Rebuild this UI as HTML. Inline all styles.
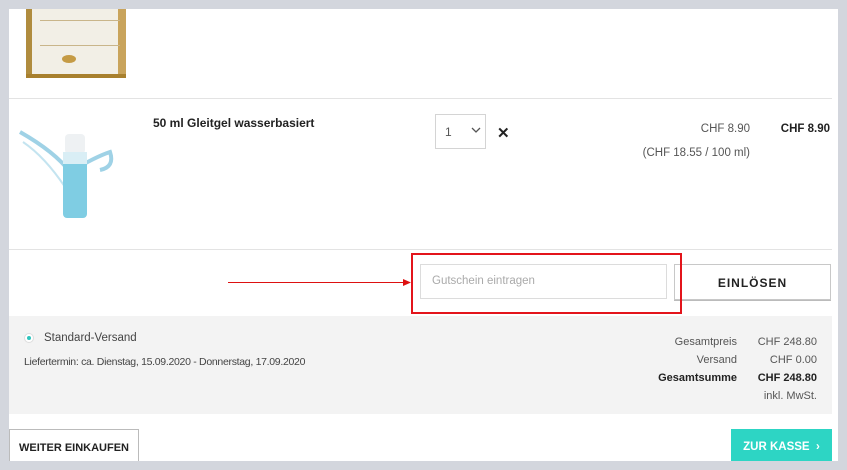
<!DOCTYPE html>
<html><head><style>
*{margin:0;padding:0;box-sizing:border-box}
body{width:847px;height:470px;background:#d3d6dd;position:relative;overflow:hidden;font-family:"Liberation Sans",sans-serif;color:#333}
.w{position:absolute;left:9px;top:9px;width:829px;height:452px;background:#fff}
.a{position:absolute}
.line{position:absolute;height:1px;background:#e3e3e3}
</style></head><body>
<div class="w"></div>
<div class="a" style="left:26px;top:9px;width:100px;height:68px;background:linear-gradient(90deg,#b08c3e 0 6px,#f2efe6 6px 92px,#c9a45c 92px);"></div>
<div class="a" style="left:40px;top:20px;width:80px;height:1px;background:#c9b58a"></div>
<div class="a" style="left:40px;top:45px;width:80px;height:1px;background:#c9b58a"></div>
<div class="a" style="left:26px;top:74px;width:100px;height:4px;background:#a8802e"></div>
<div class="a" style="left:62px;top:55px;width:14px;height:8px;border-radius:50%;background:#c59b45"></div>
<div class="line" style="left:9px;top:98px;width:823px"></div>
<svg class="a" style="left:15px;top:112px" width="110" height="110">
<path d="M5 20 Q40 40 55 60 Q80 45 95 40 Q100 55 85 58" fill="none" stroke="#9fd2e6" stroke-width="4"/>
<path d="M8 30 Q30 45 50 75" fill="none" stroke="#c4e4f0" stroke-width="2"/>
<rect x="50" y="22" width="20" height="20" rx="4" fill="#eef1f3"/>
<rect x="48" y="40" width="24" height="66" rx="4" fill="#7fcde3"/>
<rect x="48" y="40" width="24" height="12" fill="#d9eef5"/>
</svg>
<div class="a" style="left:153px;top:116px;font-size:12px;font-weight:bold;color:#222">50 ml Gleitgel wasserbasiert</div>
<div class="a" style="left:435px;top:114px;width:51px;height:35px;border:1px solid #d4d4d4"></div>
<div class="a" style="left:445px;top:125px;font-size:12px;color:#555">1</div>
<svg class="a" style="left:471px;top:127px" width="10" height="7"><path d="M1 1 L5 5 L9 1" fill="none" stroke="#555" stroke-width="1.3"/></svg>
<div class="a" style="left:497px;top:124px;font-size:15px;font-weight:bold;color:#222">✕</div>
<div class="a" style="right:97px;top:123px;font-size:11.5px;color:#555">CHF 8.90</div>
<div class="a" style="right:17px;top:123px;font-size:11.5px;font-weight:bold;color:#222">CHF 8.90</div>
<div class="a" style="right:97px;top:147px;font-size:11.5px;color:#555">(CHF 18.55 / 100 ml)</div>
<div class="line" style="left:9px;top:249px;width:823px"></div>
<div class="a" style="left:228px;top:282px;width:178px;height:1px;background:#d11"></div>
<svg class="a" style="left:403px;top:279px" width="8" height="7"><path d="M0 0 L8 3.5 L0 7z" fill="#d11"/></svg>
<div class="a" style="left:420px;top:264px;width:247px;height:35px;border:1px solid #dcdcdc"></div>
<div class="a" style="left:432px;top:275px;font-size:11.5px;color:#aaa">Gutschein eintragen</div>
<div class="a" style="left:674px;top:264px;width:157px;height:36px;border:1px solid #c8c8c8;box-shadow:0 1px 0 #bbb;text-align:center;line-height:36px;font-size:12px;font-weight:bold;letter-spacing:1px;color:#222">EINLÖSEN</div>
<div class="a" style="left:411px;top:253px;width:271px;height:61px;border:2px solid #e3141b"></div>
<div class="a" style="left:9px;top:316px;width:823px;height:98px;background:#f3f3f3"></div>
<div class="a" style="left:24px;top:333px;width:10px;height:10px;border-radius:50%;border:1px solid #ddd;background:#fff"></div>
<div class="a" style="left:27px;top:336px;width:4px;height:4px;border-radius:50%;background:#2ec4bd"></div>
<div class="a" style="left:44px;top:332px;font-size:11.5px;color:#444">Standard-Versand</div>
<div class="a" style="left:24px;top:356px;font-size:10.5px;color:#444;letter-spacing:-0.3px">Liefertermin: ca. Dienstag, 15.09.2020 - Donnerstag, 17.09.2020</div>
<div class="a" style="right:110px;top:333px;font-size:11px;color:#555;text-align:right;line-height:18px">Gesamtpreis<br>Versand<br><b style="color:#222">Gesamtsumme</b></div>
<div class="a" style="right:30px;top:333px;font-size:11px;color:#555;text-align:right;line-height:18px">CHF 248.80<br>CHF 0.00<br><b style="color:#222">CHF 248.80</b><br>inkl. MwSt.</div>
<div class="a" style="left:9px;top:429px;width:130px;height:32px;border:1px solid #bbb;border-bottom:none;font-size:11px;font-weight:bold;color:#222;line-height:36px;text-align:center">WEITER EINKAUFEN</div>
<div class="a" style="left:731px;top:429px;width:101px;height:32px;background:#2dd5c4;color:#fff;font-size:11.5px;font-weight:bold;line-height:36px;text-align:center">ZUR KASSE &nbsp;›</div>
</body></html>
